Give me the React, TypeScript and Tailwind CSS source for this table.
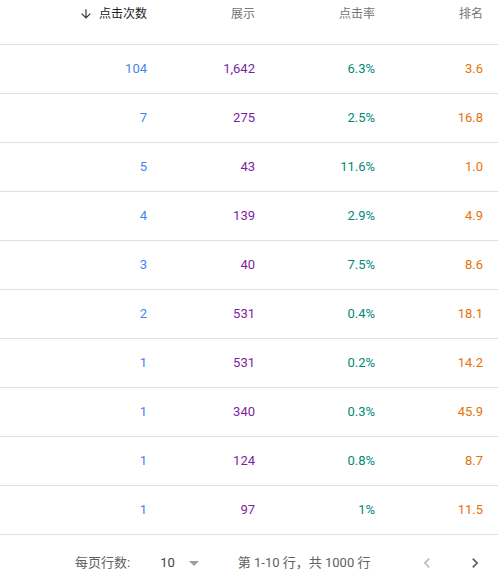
import React from 'react';

const rows = [
  ['104', '1,642', '6.3%', '3.6'],
  ['7', '275', '2.5%', '16.8'],
  ['5', '43', '11.6%', '1.0'],
  ['4', '139', '2.9%', '4.9'],
  ['3', '40', '7.5%', '8.6'],
  ['2', '531', '0.4%', '18.1'],
  ['1', '531', '0.2%', '14.2'],
  ['1', '340', '0.3%', '45.9'],
  ['1', '124', '0.8%', '8.7'],
  ['1', '97', '1%', '11.5'],
];

const font = "font-['Roboto','Noto_Sans_CJK_SC',sans-serif]";

export default function App() {
  return (
    <div className={`w-[498px] h-[587px] bg-white overflow-hidden ${font}`}>
      <div className="flex items-start h-[45px] pt-[6px] text-[12px] leading-[16px] text-[#757575] border-b border-[#e0e0e0]">
        <div className="w-[147px] flex justify-end items-center text-[#212121]">
          <svg width="14" height="14" viewBox="0 0 24 24" className="mr-[6px]" fill="#333333">
            <path d="M20 12l-1.41-1.41L13 16.17V4h-2v12.17l-5.58-5.59L4 12l8 8 8-8z" />
          </svg>
          点击次数
        </div>
        <div className="w-[108px] text-right">展示</div>
        <div className="w-[120px] text-right">点击率</div>
        <div className="w-[108px] text-right">排名</div>
      </div>
      {rows.map((r, i) => (
        <div key={i} className="flex items-center h-[49px] border-b border-[#e0e0e0] text-[13px]">
          <div className="w-[147px] text-right text-[#4285f4]">{r[0]}</div>
          <div className="w-[108px] text-right text-[#7b1fa2]">{r[1]}</div>
          <div className="w-[120px] text-right text-[#00897b]">{r[2]}</div>
          <div className="w-[108px] text-right text-[#e8710a]">{r[3]}</div>
        </div>
      ))}
      <div className="flex items-center h-[56px] text-[13px] text-[#616161] pl-[75px]">
        <span>每页行数:</span>
        <span className="ml-[30px] text-[#424242]">10</span>
        <svg width="24" height="24" viewBox="0 0 24 24" className="ml-[7px]" fill="#9e9e9e">
          <path d="M7 10l5 5 5-5z" />
        </svg>
        <span className="ml-[32px]">第 1-10 行，共 1000 行</span>
        <div className="ml-auto mr-[13px] flex items-center gap-[28px]">
          <svg width="20" height="20" viewBox="0 0 24 24" fill="#bdbdbd">
            <path d="M15.41 7.41L14 6l-6 6 6 6 1.41-1.41L10.83 12z" />
          </svg>
          <svg width="20" height="20" viewBox="0 0 24 24" fill="#616161">
            <path d="M10 6L8.59 7.41 13.17 12l-4.58 4.59L10 18l6-6z" />
          </svg>
        </div>
      </div>
    </div>
  );
}
